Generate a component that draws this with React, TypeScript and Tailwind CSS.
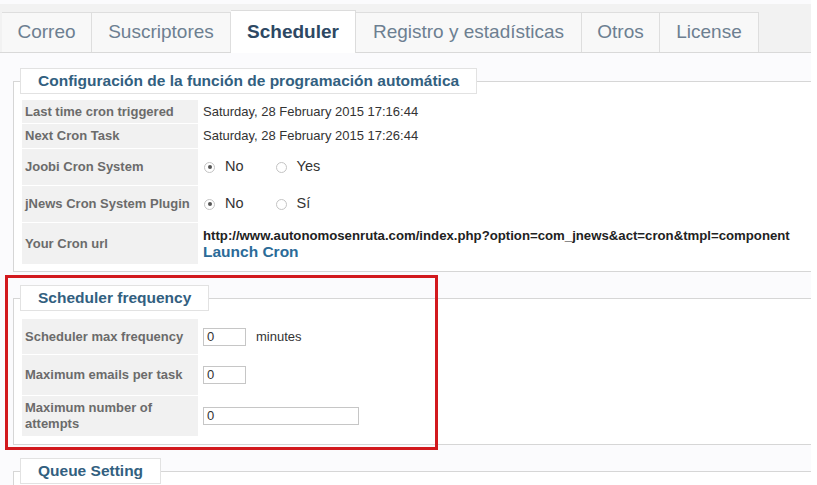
import React from "react";

const tabs = [
  { label: "Correo", w: "w-[90px]" },
  { label: "Suscriptores", w: "w-[139px]" },
  { label: "Scheduler", w: "w-[125px]", active: true },
  { label: "Registro y estadísticas", w: "w-[226px]" },
  { label: "Otros", w: "w-[78px]" },
  { label: "License", w: "w-[99px]" },
];

function Radio({ checked, label }: { checked?: boolean; label: string }) {
  return (
    <span className="flex items-center">
      <span className="w-[11px] h-[11px] rounded-full border border-[#c4c4c4] bg-white flex items-center justify-center">
        {checked && <span className="w-[4px] h-[4px] rounded-full bg-[#555]"></span>}
      </span>
      <span className="ml-[10px] text-[14.5px] text-[#333]">{label}</span>
    </span>
  );
}

function Label({ children }: { children: React.ReactNode }) {
  return (
    <div className="bg-[#f1f1f1] flex items-center pl-[3px] text-[13px] leading-[16px] font-bold text-[#6b6b6b]">
      {children}
    </div>
  );
}

function Legend({ children }: { children: React.ReactNode }) {
  return (
    <legend className="px-[17px] h-[26px] flex items-center bg-white border border-[#e2e2e2] text-[15.5px] font-bold text-[#32607f]">
      {children}
    </legend>
  );
}

const inputCls =
  "h-[18px] border border-[#c6c6c6] bg-white px-[3px] text-[13px] text-[#333] outline-none";

export default function App() {
  return (
    <div className="relative w-[817px] h-[485px] overflow-hidden bg-white font-['Liberation_Sans',Arial,sans-serif]">
      <div className="w-[811px] h-[485px] bg-[#fbfbfd] pt-[4px]">
        {/* tabs */}
        <div className="h-[49px] bg-[#f2f2f2] border-b border-[#d9d9d9] flex items-end pl-[2px]">
          {tabs.map((t) =>
            t.active ? (
              <div
                key={t.label}
                className={`${t.w} h-[43px] -mb-px bg-white border-t border-r border-[#dcdcdc] flex items-center justify-center text-[19px] font-bold text-[#2d4863]`}
              >
                {t.label}
              </div>
            ) : (
              <div
                key={t.label}
                className={`${t.w} h-[40px] bg-[#f8f8f8] border-t border-r border-[#dedede] flex items-center justify-center text-[19px] text-[#6d7f91]`}
              >
                {t.label}
              </div>
            )
          )}
        </div>

        {/* config */}
        <fieldset className="ml-[13px] mt-[15px] border border-r-0 border-[#d6d6d6] bg-white pl-[6px] pb-[7px]">
          <Legend>Configuración de la función de programación automática</Legend>
          <div className="mt-[6px] ml-[2px] grid grid-cols-[176px_1fr] gap-x-[5px] gap-y-[1px]">
            <Label><span className="h-[23px] flex items-center">Last time cron triggered</span></Label>
            <div className="flex items-center text-[13px] text-[#333]">Saturday, 28 February 2015 17:16:44</div>
            <Label><span className="h-[24px] flex items-center">Next Cron Task</span></Label>
            <div className="flex items-center text-[13px] text-[#333]">Saturday, 28 February 2015 17:26:44</div>
            <Label><span className="h-[36px] flex items-center">Joobi Cron System</span></Label>
            <div className="flex items-center gap-[32px] pl-[1px]">
              <Radio checked label="No" />
              <Radio label="Yes" />
            </div>
            <Label><span className="h-[36px] flex items-center">jNews Cron System Plugin</span></Label>
            <div className="flex items-center gap-[32px] pl-[1px]">
              <Radio checked label="No" />
              <Radio label="Sí" />
            </div>
            <Label><span className="h-[41px] flex items-center">Your Cron url</span></Label>
            <div className="flex flex-col justify-center pt-[2px]">
              <span className="text-[13.2px] leading-[15px] font-bold text-[#222] whitespace-nowrap">
                http://www.autonomosenruta.com/index.php?option=com_jnews&amp;act=cron&amp;tmpl=component
              </span>
              <span className="text-[15.5px] leading-[18px] font-bold text-[#2b6b98]">Launch Cron</span>
            </div>
          </div>
        </fieldset>

        {/* scheduler frequency */}
        <fieldset className="ml-[13px] mt-[13px] border border-r-0 border-[#d6d6d6] bg-white pl-[6px] pb-[8px]">
          <Legend>Scheduler frequency</Legend>
          <div className="mt-[8px] ml-[2px] grid grid-cols-[176px_1fr] gap-x-[5px] gap-y-[1px]">
            <Label><span className="h-[35px] flex items-center">Scheduler max frequency</span></Label>
            <div className="flex items-center">
              <input readOnly value="0" className={`w-[43px] ${inputCls}`} />
              <span className="ml-[10px] text-[13px] text-[#333]">minutes</span>
            </div>
            <Label><span className="h-[40px] flex items-center">Maximum emails per task</span></Label>
            <div className="flex items-center">
              <input readOnly value="0" className={`w-[43px] ${inputCls}`} />
            </div>
            <Label>
              <span className="h-[40px] flex items-center">
                Maximum number of
                <br />
                attempts
              </span>
            </Label>
            <div className="flex items-center">
              <input readOnly value="0" className={`w-[156px] ${inputCls}`} />
            </div>
          </div>
        </fieldset>

        {/* queue */}
        <fieldset className="ml-[13px] mt-[13px] border border-r-0 border-[#d6d6d6] bg-white pl-[6px] h-[60px]">
          <Legend>Queue Setting</Legend>
        </fieldset>
      </div>

      {/* annotation */}
      <div className="absolute left-[5px] top-[275px] w-[433px] h-[175px] border-[3px] border-[#d2191e]"></div>
    </div>
  );
}
